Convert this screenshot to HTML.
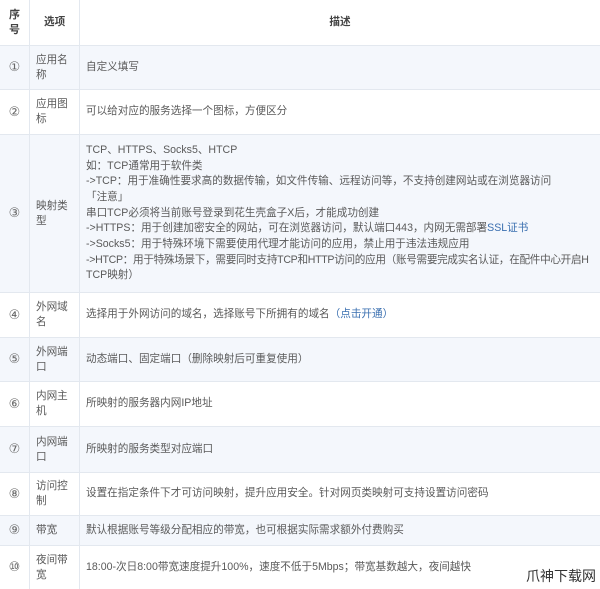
<!DOCTYPE html>
<html><head><meta charset="utf-8"><style>
body{margin:0;width:600px;height:589px;overflow:hidden;background:#fff;font-family:"Liberation Sans","Noto Sans CJK SC",sans-serif;color:#5a5a5a;font-size:10.6px}
.r{position:absolute;left:0;width:600px;border-top:1px solid #e3e8ef;box-sizing:border-box}
.b{background:#f4f7fc}
.c{position:absolute;top:0;bottom:0;display:flex;align-items:center;box-sizing:border-box}
.c1{left:0;width:30px;justify-content:center;border-right:1px solid #e3e8ef;font-family:"DejaVu Sans","Noto Sans CJK SC",sans-serif;font-size:13px;color:#666}
.c2{left:30px;width:50px;padding-left:6px;border-right:1px solid #e3e8ef;line-height:15px;padding-right:6px}
.c3{left:80px;right:0;padding-left:6px;line-height:15.7px;white-space:nowrap}
a{color:#3a6fb0;text-decoration:none}
</style></head><body>
<div class="r" style="top:0;height:45px;border-top:none"><div class="c c1" style="flex-direction:column;line-height:15px;font-weight:bold;color:#444;font-family:'Liberation Sans','Noto Sans CJK SC',sans-serif;font-size:11px">序<br>号</div><div class="c c2" style="padding-left:14px;font-weight:bold;color:#444">选项</div><div class="c c3" style="justify-content:center;padding-left:0;color:#444;font-weight:bold">描述</div></div>
<div class="r b" style="top:45px;height:44px"><div class="c c1">①</div><div class="c c2">应用名称</div><div class="c c3">自定义填写</div></div>
<div class="r" style="top:89px;height:45px"><div class="c c1">②</div><div class="c c2">应用图标</div><div class="c c3">可以给对应的服务选择一个图标，方便区分</div></div>
<div class="r b" style="top:134px;height:158px"><div class="c c1">③</div><div class="c c2">映射类型</div><div class="c c3"><div>TCP、HTTPS、Socks5、HTCP<br>如：TCP通常用于软件类<br>->TCP：用于准确性要求高的数据传输，如文件传输、远程访问等，不支持创建网站或在浏览器访问<br>「注意」<br>串口TCP必须将当前账号登录到花生壳盒子X后，才能成功创建<br>->HTTPS：用于创建加密安全的网站，可在浏览器访问，默认端口443，内网无需部署<a>SSL证书</a><br>->Socks5：用于特殊环境下需要使用代理才能访问的应用，禁止用于违法违规应用<br><span style="letter-spacing:-0.3px">->HTCP：用于特殊场景下，需要同时支持TCP和HTTP访问的应用（账号需要完成实名认证，在配件中心开启H</span><br>TCP映射）</div></div></div>
<div class="r" style="top:292px;height:45px"><div class="c c1">④</div><div class="c c2">外网域名</div><div class="c c3">选择用于外网访问的域名，选择账号下所拥有的域名 <a>（点击开通）</a></div></div>
<div class="r b" style="top:337px;height:44px"><div class="c c1">⑤</div><div class="c c2">外网端口</div><div class="c c3">动态端口、固定端口（删除映射后可重复使用）</div></div>
<div class="r" style="top:381px;height:45px"><div class="c c1">⑥</div><div class="c c2">内网主机</div><div class="c c3">所映射的服务器内网IP地址</div></div>
<div class="r b" style="top:426px;height:46px"><div class="c c1">⑦</div><div class="c c2">内网端口</div><div class="c c3">所映射的服务类型对应端口</div></div>
<div class="r" style="top:472px;height:43px"><div class="c c1">⑧</div><div class="c c2">访问控制</div><div class="c c3">设置在指定条件下才可访问映射，提升应用安全。针对网页类映射可支持设置访问密码</div></div>
<div class="r b" style="top:515px;height:30px"><div class="c c1">⑨</div><div class="c c2">带宽</div><div class="c c3">默认根据账号等级分配相应的带宽，也可根据实际需求额外付费购买</div></div>
<div class="r" style="top:545px;height:44px"><div class="c c1">⑩</div><div class="c c2">夜间带宽</div><div class="c c3">18:00-次日8:00带宽速度提升100%，速度不低于5Mbps；带宽基数越大，夜间越快</div></div>
<div style="position:absolute;right:4px;bottom:3px;font-size:14px;color:#333">爪神下载网</div>
</body></html>
